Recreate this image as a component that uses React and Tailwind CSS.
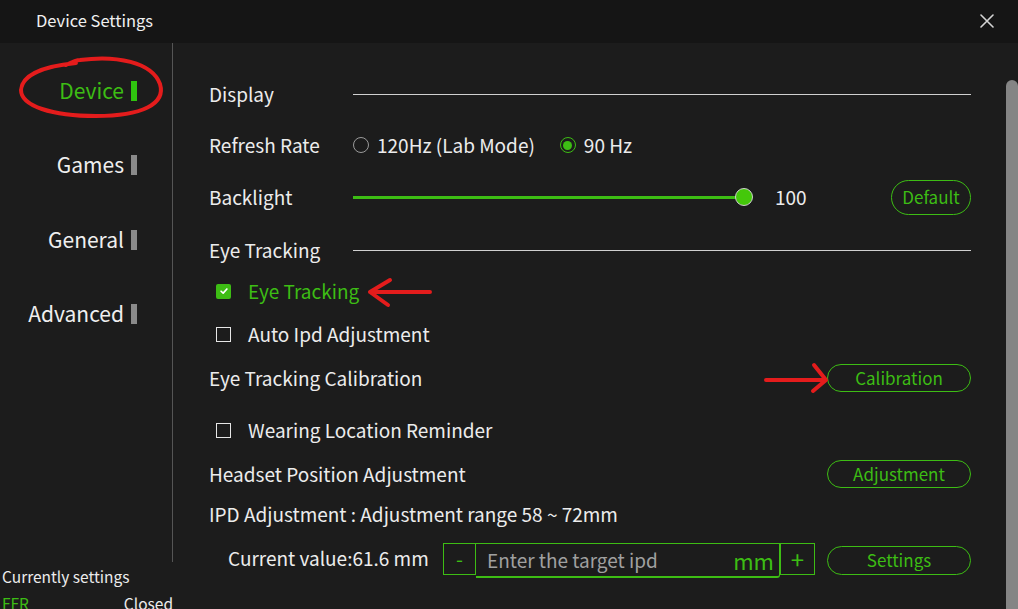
import { useState } from 'react'

const navItems = [
  { label: 'Device', active: true },
  { label: 'Games' },
  { label: 'General' },
  { label: 'Advanced' },
]

// Function: Radio
function Radio({ checked, label }) {
  return (
    <div className="flex items-center gap-[8px]">
      {checked ? (
        <span className="flex h-[16px] w-[16px] items-center justify-center rounded-full border-[1.5px] border-[#3dbd14]">
          <span className="h-[9px] w-[9px] rounded-full bg-[#3dbd14]" />
        </span>
      ) : (
        <span className="h-[16px] w-[16px] rounded-full border-[1.5px] border-[#9a9a9a]" />
      )}
      <span>{label}</span>
    </div>
  )
}

// Function: Checkbox
function Checkbox({ checked, label }) {
  return (
    <div className="flex items-center gap-[17px] pl-[7px]">
      {checked ? (
        <span className="flex h-[15px] w-[15px] items-center justify-center rounded-[2px] bg-[#3dbd14]">
          <svg viewBox="0 0 12 12" className="h-[10px] w-[10px]" fill="none" stroke="#fff" strokeWidth="2" strokeLinecap="round" strokeLinejoin="round">
            <path d="M2.5 6.3 5 8.6 9.5 3.6" />
          </svg>
        </span>
      ) : (
        <span className="h-[15px] w-[15px] border-[1.5px] border-[#e6e6e6]" />
      )}
      <span className={checked ? 'text-[#3dbd14]' : ''}>{label}</span>
    </div>
  )
}

// Function: PillButton
function PillButton({ children, className }) {
  return (
    <button
      type="button"
      className={`flex items-center justify-center rounded-full border-[1.5px] border-[#3dbd14] text-[17px] text-[#3dbd14] ${className}`}
    >
      {children}
    </button>
  )
}

export default function App() {
  const [backlight] = useState(100)

  return (
    <div className="relative h-[609px] w-[1018px] overflow-hidden bg-[#1c1c1c] font-['Noto_Sans_CJK_SC','Noto_Sans',sans-serif] text-[#ececec]">
      <header className="flex h-[43px] items-center justify-between bg-[#151515] pb-[2px] pl-[36px] pr-[24px]">
        <span className="text-[16.5px] text-[#f0f0f0]">Device Settings</span>
        <svg viewBox="0 0 14 14" className="h-[14px] w-[14px]" fill="none" stroke="#d4d4d4" strokeWidth="1.6" strokeLinecap="round">
          <path d="M1 1 13 13M13 1 1 13" />
        </svg>
      </header>

      <div className="flex h-[566px]">
        <aside className="flex w-[173px] shrink-0 flex-col">
          <nav className="flex h-[519px] shrink-0 flex-col border-r border-[#555] pr-[35px] pt-[28px]">
            {navItems.map((item, i) => (
              <div
                key={item.label}
                className={`flex h-10 items-center justify-end gap-[7px] text-[21px] ${i === 0 ? '' : i === 2 ? 'mt-[35px]' : 'mt-[34px]'}`}
              >
                <span className={item.active ? 'text-[#3dbd14]' : 'text-[#efefef]'}>{item.label}</span>
                <span className={`h-[20px] w-[6px] ${item.active ? 'bg-[#2fc40f]' : 'bg-[#8a8a8a]'}`} />
              </div>
            ))}
          </nav>
          <div className="shrink-0 pl-[2px] pt-[4px] text-[15.5px] leading-[20px]">
            <p>Currently settings</p>
            <div className="mt-[7px] flex">
              <span className="w-[126px] text-[#3dbd14]">FFR</span>
              <span>Closed</span>
            </div>
          </div>
        </aside>

        <main className="flex-1 pl-[36px] pr-[35px] pt-[31px] text-[19px]">
          <div className="flex h-10 items-center">
            <span className="w-[144px]">Display</span>
            <span className="h-px flex-1 bg-[#d0d0d0]" />
          </div>

          <div className="mt-[11px] flex h-10 items-center">
            <span className="w-[144px]">Refresh Rate</span>
            <div className="flex items-center gap-[25px]">
              <Radio label="120Hz (Lab Mode)" />
              <Radio checked label="90 Hz" />
            </div>
          </div>

          <div className="mt-[12px] flex h-10 items-center">
            <span className="w-[144px]">Backlight</span>
            <div className="flex items-center">
              <span className="h-[3px] w-[391px] bg-[#3dbd14]" />
              <span className="-ml-[9px] h-[18px] w-[18px] rounded-full border border-[#cfcfcf] bg-[#44c80a]" />
              <span className="ml-[22px]">{backlight}</span>
            </div>
            <span className="flex-1" />
            <PillButton className="h-[35px] w-[80px]">Default</PillButton>
          </div>

          <div className="mt-[13px] flex h-10 items-center">
            <span className="w-[144px]">Eye Tracking</span>
            <span className="h-px flex-1 bg-[#d0d0d0]" />
          </div>

          <div className="mt-[1px] flex h-10 items-center">
            <Checkbox checked label="Eye Tracking" />
          </div>

          <div className="mt-[3px] flex h-10 items-center">
            <Checkbox label="Auto Ipd Adjustment" />
          </div>

          <div className="mt-[4px] flex h-10 items-center justify-between">
            <span>Eye Tracking Calibration</span>
            <PillButton className="h-[28px] w-[144px]">Calibration</PillButton>
          </div>

          <div className="mt-[12px] flex h-10 items-center">
            <Checkbox label="Wearing Location Reminder" />
          </div>

          <div className="mt-[4px] flex h-10 items-center justify-between">
            <span>Headset Position Adjustment</span>
            <PillButton className="h-[28px] w-[144px]">Adjustment</PillButton>
          </div>

          <div className="flex h-10 items-center">
            <span>IPD Adjustment : Adjustment range 58 ~ 72mm</span>
          </div>

          <div className="mt-[6px] flex h-10 items-center">
            <span className="mb-[4px] w-[234px] shrink-0 whitespace-nowrap pl-[19px]">Current value:61.6 mm</span>
            <div className="flex items-start">
              <span className="flex h-[32px] w-[33px] items-center justify-center border border-[#3dbd14] text-[20px] text-[#3dbd14]">-</span>
              <div className="flex h-[35px] w-[304px] items-center justify-between rounded-br-[3px] border border-b-2 border-l-0 border-[#3dbd14] pl-[11px] pr-[5px] pt-[2px]">
                <span className="text-[#a0a0a0]">Enter the target ipd</span>
                <span className="text-[22px] text-[#3dbd14]">mm</span>
              </div>
              <span className="flex h-[32px] w-[35px] items-center justify-center border border-[#3dbd14] text-[24px] text-[#3dbd14]">+</span>
            </div>
            <span className="flex-1" />
            <PillButton className="h-[29px] w-[144px]">Settings</PillButton>
          </div>
        </main>

        <div className="mt-[37px] w-[12px] rounded-t-full bg-[#858585]" />
      </div>

      <svg className="pointer-events-none absolute inset-0" width="1018" height="609" viewBox="0 0 1018 609" fill="none" stroke="#e41c1c" strokeWidth="4" strokeLinecap="round" strokeLinejoin="round">
        <path d="M66 65 C72 62 76 60 80 60 C116 55 152 62 160 84 C166 104 142 116 96 116 C52 116 21 106 21 90 C22 74 46 66 76 63" />
        <path d="M430 292 L370 292 M370 292 L390 280 M370 292 L388 305" />
        <path d="M766 380 L826 380 M826 380 L814 365 M826 380 L813 391" />
      </svg>
    </div>
  )
}
